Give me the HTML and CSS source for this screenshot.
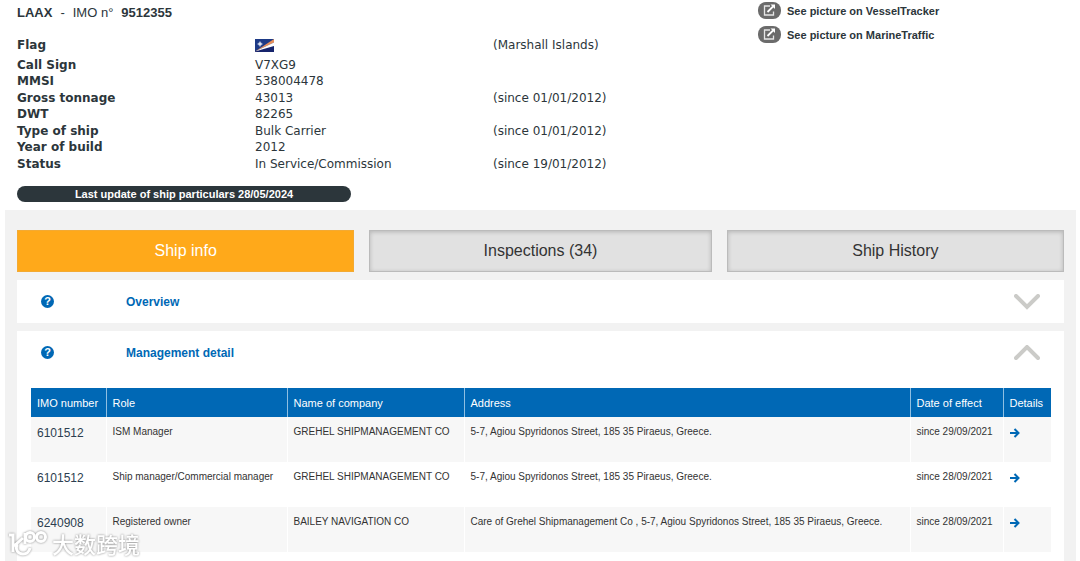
FILE: index.html
```html
<!DOCTYPE html>
<html lang="en">
<head>
    <meta charset="UTF-8">
    <meta name="viewport" content="width=device-width, initial-scale=1.0">
    <title>LAAX - IMO n° 9512355</title>
    <link rel="stylesheet" href="styles.css">
</head>
<body>
    <header class="ship-header">
        <div class="ship-main">
            <h1 class="ship-title"><b>LAAX</b><span>-</span><span>IMO n°</span><b>9512355</b></h1>
            <table class="particulars">
                <tr>
                    <th scope="row">Flag</th>
                    <td>
                        <svg class="flag" viewBox="0 0 19 13" role="img" aria-label="Marshall Islands">
                            <rect width="19" height="13" fill="#1d3a86"/>
                            <path d="M0 12 19 5v8H0z" fill="#16246c"/>
                            <path d="M0 12.5 19 0v3.5z" fill="#e8905a"/>
                            <path d="M0 12.5 19 3.5V7z" fill="#fff"/>
                            <circle cx="5" cy="5" r="1.8" fill="#fff"/>
                            <path d="M5 2v6M2 5h6" stroke="#b9c6e6" stroke-width=".6"/>
                        </svg>
                    </td>
                    <td>(Marshall Islands)</td>
                </tr>
                <tr><th scope="row">Call Sign</th><td>V7XG9</td><td></td></tr>
                <tr><th scope="row">MMSI</th><td>538004478</td><td></td></tr>
                <tr><th scope="row">Gross tonnage</th><td>43013</td><td>(since 01/01/2012)</td></tr>
                <tr><th scope="row">DWT</th><td>82265</td><td></td></tr>
                <tr><th scope="row">Type of ship</th><td>Bulk Carrier</td><td>(since 01/01/2012)</td></tr>
                <tr><th scope="row">Year of build</th><td>2012</td><td></td></tr>
                <tr><th scope="row">Status</th><td>In Service/Commission</td><td>(since 19/01/2012)</td></tr>
            </table>
            <p class="last-update">Last update of ship particulars 28/05/2024</p>
        </div>
        <nav class="pictures">
            <a href="#">
                <svg class="external" viewBox="0 0 23 17" aria-hidden="true">
                    <rect width="23" height="17" rx="8" fill="#6b6b6b"/>
                    <path d="M12 4H6.500v9h9V9.500" fill="none" stroke="#e6e6e6" stroke-width="1.300"/>
                    <path d="M9.500 10 15 4.500" stroke="#fff" stroke-width="1.800"/>
                    <path d="M12.500 2.500H17V7z" fill="#fff"/>
                </svg>
                See picture on VesselTracker
            </a>
            <a href="#">
                <svg class="external" viewBox="0 0 23 17" aria-hidden="true">
                    <rect width="23" height="17" rx="8" fill="#6b6b6b"/>
                    <path d="M12 4H6.500v9h9V9.500" fill="none" stroke="#e6e6e6" stroke-width="1.300"/>
                    <path d="M9.500 10 15 4.500" stroke="#fff" stroke-width="1.800"/>
                    <path d="M12.500 2.500H17V7z" fill="#fff"/>
                </svg>
                See picture on MarineTraffic
            </a>
        </nav>
    </header>

    <main class="content">
        <div class="tabs">
            <button type="button" class="tab active">Ship info</button>
            <button type="button" class="tab">Inspections (34)</button>
            <button type="button" class="tab">Ship History</button>
        </div>

        <section class="panel">
            <div class="panel-heading">
                <button type="button" class="help" aria-label="Help">?</button>
                <h2>Overview</h2>
                <button type="button" class="toggle" aria-label="Expand Overview">
                    <svg viewBox="0 0 26 16"><path d="M2 2 13 13 24 2"/></svg>
                </button>
            </div>
        </section>

        <section class="panel open">
            <div class="panel-heading">
                <button type="button" class="help" aria-label="Help">?</button>
                <h2>Management detail</h2>
                <button type="button" class="toggle" aria-label="Collapse Management detail">
                    <svg viewBox="0 0 26 16"><path d="M2 13 13 2 24 13"/></svg>
                </button>
            </div>
            <table class="companies">
                <thead>
                    <tr>
                        <th class="col-imo">IMO number</th>
                        <th class="col-role">Role</th>
                        <th class="col-name">Name of company</th>
                        <th>Address</th>
                        <th class="col-date">Date of effect</th>
                        <th class="col-details">Details</th>
                    </tr>
                </thead>
                <tbody>
                    <tr>
                        <td class="imo">6101512</td>
                        <td>ISM Manager</td>
                        <td>GREHEL SHIPMANAGEMENT CO</td>
                        <td>5-7, Agiou Spyridonos Street, 185 35 Piraeus, Greece.</td>
                        <td>since 29/09/2021</td>
                        <td><a href="#" class="details" aria-label="Details"><svg viewBox="0 0 10 10"><path d="M0 5h8M4.500 1l4 4-4 4"/></svg></a></td>
                    </tr>
                    <tr>
                        <td class="imo">6101512</td>
                        <td>Ship manager/Commercial manager</td>
                        <td>GREHEL SHIPMANAGEMENT CO</td>
                        <td>5-7, Agiou Spyridonos Street, 185 35 Piraeus, Greece.</td>
                        <td>since 28/09/2021</td>
                        <td><a href="#" class="details" aria-label="Details"><svg viewBox="0 0 10 10"><path d="M0 5h8M4.500 1l4 4-4 4"/></svg></a></td>
                    </tr>
                    <tr>
                        <td class="imo">6240908</td>
                        <td>Registered owner</td>
                        <td>BAILEY NAVIGATION CO</td>
                        <td>Care of Grehel Shipmanagement Co , 5-7, Agiou Spyridonos Street, 185 35 Piraeus, Greece.</td>
                        <td>since 28/09/2021</td>
                        <td><a href="#" class="details" aria-label="Details"><svg viewBox="0 0 10 10"><path d="M0 5h8M4.500 1l4 4-4 4"/></svg></a></td>
                    </tr>
                </tbody>
            </table>
        </section>
    </main>

    <div class="watermark">
        <svg viewBox="0 0 40 28" aria-hidden="true">
            <path d="M1 6h4v17M6 17l9-8M9 15c-2 6 1 10 6 10 4 0 6-2 7-6"/>
            <path d="M17 4v11"/>
            <circle cx="22" cy="8" r="4.500"/>
            <circle cx="33" cy="8" r="4.500"/>
        </svg>
        <span>大数跨境</span>
    </div>
</body>
</html>
```
FILE: styles.css
```css
* {
    box-sizing: border-box;
}
body {
    display: flex;
    flex-direction: column;
    min-height: 100vh;
    margin: 0;
    padding: 0 4px 0 5px;
    font-family: "Liberation Sans", Arial, sans-serif;
    font-size: 11px;
    color: #2c363b;
    background-color: #fff;
}
button {
    font-family: inherit;
    cursor: pointer;
}

/* ship particulars */
.ship-header {
    display: flex;
    padding: 5px 12px 8px;
}
.ship-main {
    width: 741px;
}
.ship-title {
    display: flex;
    gap: 8px;
    margin: 0;
    font-size: 13px;
    font-weight: normal;
    line-height: 16px;
}
.particulars {
    margin-top: 13px;
    border-collapse: collapse;
    font-family: Verdana, "DejaVu Sans", sans-serif;
    font-size: 12px;
    line-height: 16px;
    text-align: left;
}
.particulars th,
.particulars td {
    width: 238px;
    height: 16px;
    padding: 0;
}
.particulars tr:nth-child(even) td {
    height: 17px;
}
.particulars tr:first-child td {
    height: 22px;
}
.flag {
    display: block;
    width: 19px;
    height: 13px;
}
.last-update {
    width: 334px;
    margin: 14px 0 0;
    border-radius: 8px;
    font-size: 11px;
    font-weight: bold;
    line-height: 16px;
    text-align: center;
    color: #fff;
    background-color: #2c363b;
}
.pictures {
    display: flex;
    flex-direction: column;
    align-items: flex-start;
    gap: 7px;
    margin-top: -3px;
}
.pictures a {
    display: flex;
    align-items: center;
    gap: 6px;
    font-weight: bold;
    text-decoration: none;
    color: #2c363b;
}
.external {
    width: 23px;
    height: 17px;
}

/* tabs */
.content {
    flex: 1;
    display: flex;
    flex-direction: column;
    gap: 8px;
    padding: 20px 12px 0;
    background-color: #f2f2f2;
}
.tabs {
    display: grid;
    grid-template-columns: 337fr 342fr 337fr;
    gap: 15px;
}
.tab {
    height: 42px;
    padding: 0;
    border: 1px solid #bbb;
    font-size: 16px;
    color: #333;
    background-color: #e1e1e1;
    box-shadow: inset 0 1px 4px rgba(0,0,0,0.2);
}
.tab.active {
    border-color: #f3aa33;
    color: #fff;
    background-color: #ffa91a;
    box-shadow: none;
}

/* panels */
.panel {
    padding: 0 13px 0 14px;
    background-color: #fff;
}
.panel.open {
    flex: 1;
}
.panel-heading {
    display: flex;
    align-items: center;
    height: 43px;
    padding: 0 11px 0 10px;
}
.panel-heading h2 {
    flex: 1;
    margin: 0 0 0 72px;
    font-size: 12px;
    line-height: 14px;
    color: #0068b5;
}
.help {
    width: 13px;
    height: 13px;
    padding: 0;
    border: none;
    border-radius: 50%;
    font-size: 11px;
    font-weight: bold;
    line-height: 13px;
    color: #fff;
    background-color: #0068b5;
}
.toggle {
    padding: 0;
    border: none;
    background: none;
}
.toggle svg {
    display: block;
    width: 26px;
    height: 16px;
    fill: none;
    stroke: #cbcbc8;
    stroke-width: 4;
    stroke-linecap: round;
}

/* companies */
.companies {
    width: 100%;
    margin-top: 14px;
    border-collapse: collapse;
    table-layout: fixed;
    text-align: left;
    color: #333;
}
.companies th {
    height: 29px;
    padding: 0 6px;
    border-left: 1px solid #8fbfe2;
    font-size: 11px;
    font-weight: normal;
    white-space: nowrap;
    color: #fff;
    background-color: #0068b5;
}
.companies td {
    height: 45px;
    padding: 8px 6px;
    border-left: 1px solid #fff;
    font-size: 10px;
    line-height: 14px;
    vertical-align: top;
    white-space: nowrap;
}
.companies th:first-child,
.companies td:first-child {
    border-left: none;
}
.companies tbody tr:nth-child(odd) {
    background-color: #f7f7f7;
}
.companies .imo {
    font-size: 12px;
    line-height: 16px;
    color: #2c3e50;
}
.col-imo {
    width: 75px;
}
.col-role {
    width: 181px;
}
.col-name {
    width: 177px;
}
.col-date {
    width: 93px;
}
.col-details {
    width: 48px;
}
.details {
    display: block;
    padding-top: 3px;
}
.details svg {
    display: block;
    width: 10px;
    height: 10px;
    fill: none;
    stroke: #0068b5;
    stroke-width: 2;
}

/* watermark */
.watermark {
    position: absolute;
    left: 8px;
    bottom: 4px;
    display: flex;
    align-items: center;
    gap: 4px;
    font-family: "Noto Sans CJK SC", sans-serif;
    font-size: 22px;
    font-weight: 500;
    line-height: 28px;
    color: #fff;
    filter: drop-shadow(0 0 1px #888);
}
.watermark svg {
    width: 40px;
    height: 28px;
    fill: none;
    stroke: #fff;
    stroke-width: 3;
}
```
